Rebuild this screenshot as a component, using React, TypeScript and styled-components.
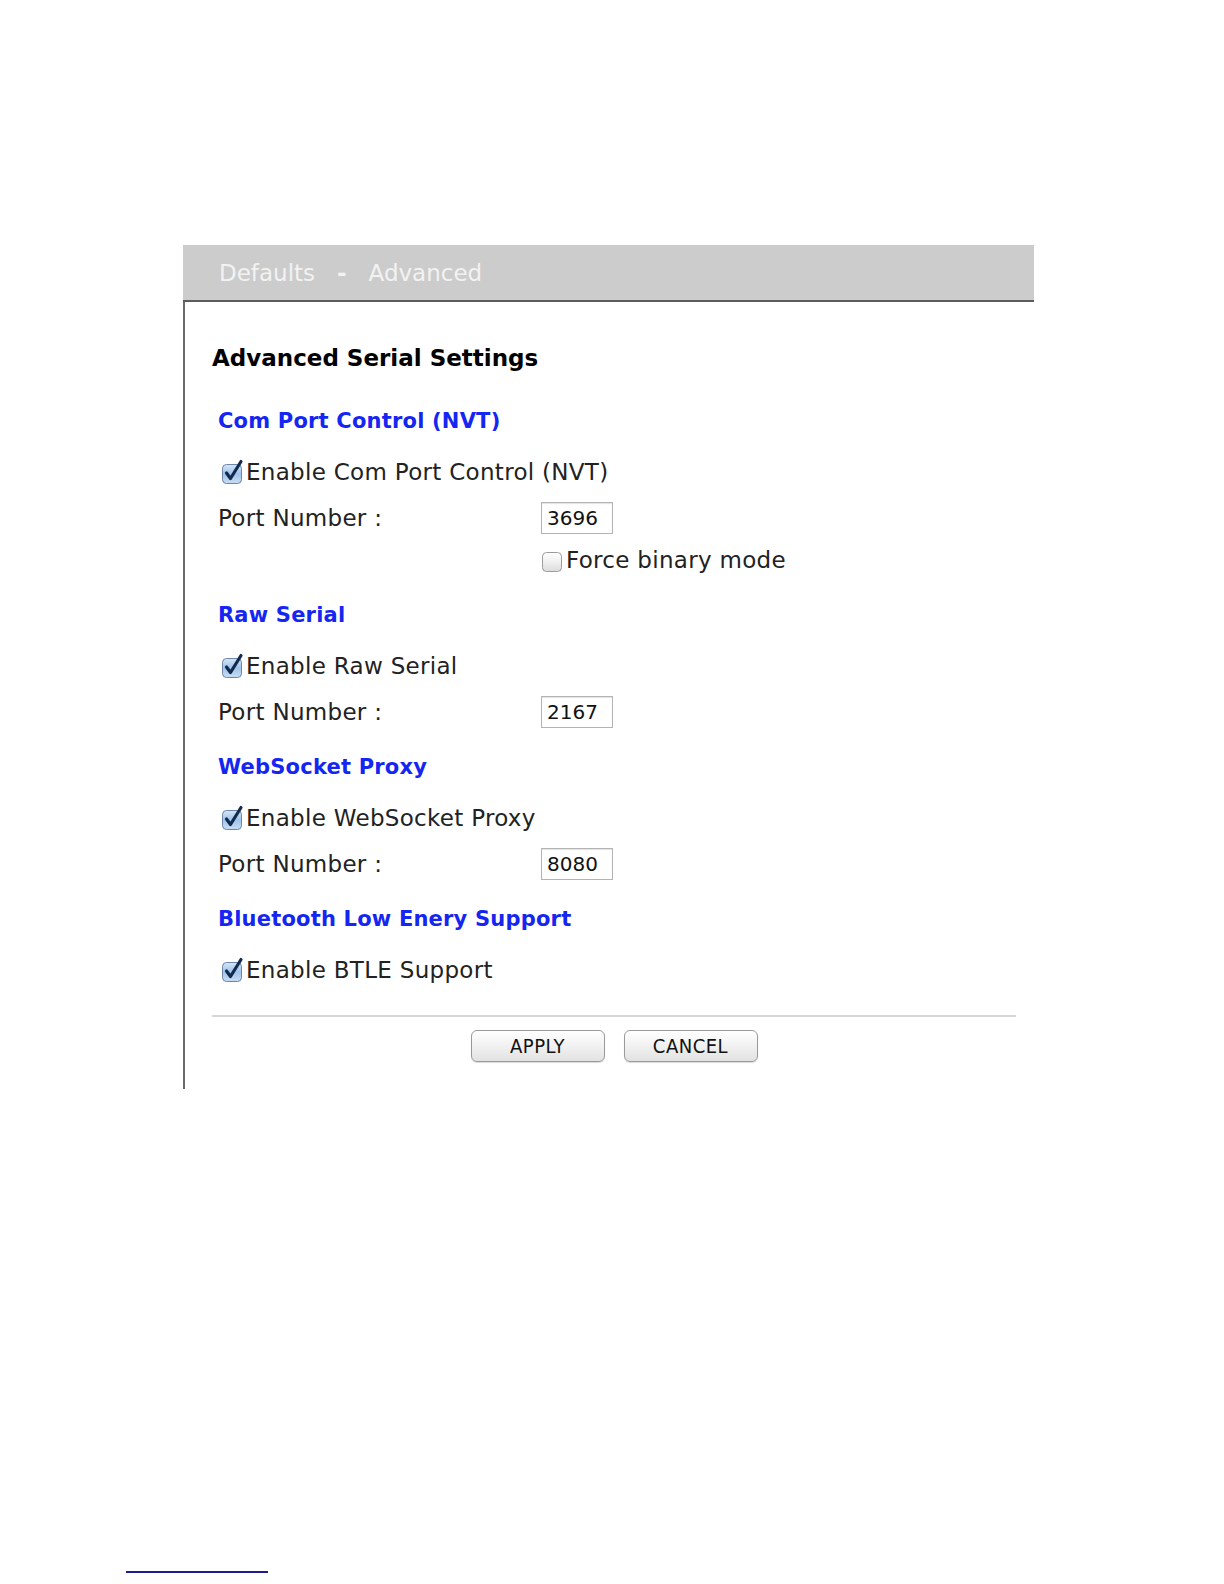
import React from 'react';
import styled, { createGlobalStyle } from 'styled-components';

const GlobalStyle = createGlobalStyle`
  html, body {
    margin: 0;
    background: #ffffff;
    font-family: "DejaVu Sans", Verdana, sans-serif;
  }
`;

const Page = styled.div`
  width: 100%;
  height: 1584px;
  overflow: hidden;
  padding-top: 245px;
  padding-left: 126px;
  box-sizing: border-box;
`;

const Panel = styled.div`
  margin-left: 57px;
  width: 851px;
`;

const TabBar = styled.div`
  height: 55px;
  background: #cccccc;
  border-bottom: 2px solid #5c5c5c;
  display: flex;
  align-items: center;
  padding-left: 36px;
  gap: 22px;
  color: #f2f2f2;
  font-size: 23px;
`;

const Dash = styled.span`
  font-weight: bold;
`;

const Body = styled.div`
  border-left: 2px solid #6a6a6a;
  padding: 40px 18px 27px 27px;
  display: flex;
  flex-direction: column;
`;

const Heading = styled.h1`
  margin: 0 0 31px;
  height: 32px;
  display: flex;
  align-items: center;
  font-size: 23px;
  font-weight: bold;
  color: #000;
`;

const Section = styled.section`
  display: flex;
  flex-direction: column;
  padding-left: 6px;
  & + & {
    margin-top: 23px;
  }
`;

const SectionTitle = styled.h2`
  margin: 0 0 19px;
  height: 32px;
  display: flex;
  align-items: center;
  font-size: 21px;
  letter-spacing: 0.2px;
  font-weight: bold;
  color: #1526f2;
`;

const Row = styled.div<{ $gap?: number }>`
  height: 32px;
  display: flex;
  align-items: center;
  font-size: 23px;
  letter-spacing: 0.3px;
  color: #222;
  margin-top: ${(p) => p.$gap ?? 14}px;
  &:first-of-type {
    margin-top: 0;
  }
`;

const CheckLabel = styled.label<{ $indent?: number }>`
  display: flex;
  align-items: center;
  margin-left: ${(p) => p.$indent ?? 2}px;
`;

const FieldLabel = styled.span`
  width: 323px;
  flex-shrink: 0;
`;

const PortInput = styled.div`
  width: 72px;
  height: 32px;
  box-sizing: border-box;
  border: 1px solid #b4b4b4;
  box-shadow: inset 0 1px 1px rgba(0, 0, 0, 0.12);
  display: flex;
  align-items: center;
  padding-left: 5px;
  font-size: 20px;
  letter-spacing: 0;
  color: #111;
`;

const Divider = styled.hr`
  margin: 29px 0 13px;
  border: none;
  border-top: 2px solid #d6d6d6;
`;

const Buttons = styled.div`
  display: flex;
  justify-content: center;
  gap: 19px;
`;

const Button = styled.button`
  width: 134px;
  height: 32px;
  border: 1px solid #9a9a9a;
  border-radius: 6px;
  background: linear-gradient(#ffffff, #f1f1f1 50%, #e2e2e2);
  box-shadow: 0 1px 1px rgba(0, 0, 0, 0.15);
  font-family: "DejaVu Sans Condensed", "DejaVu Sans", sans-serif;
  font-size: 20px;
  letter-spacing: 0.5px;
  color: #111;
  padding: 0;
`;

const FootLine = styled.div`
  margin-top: 482px;
  width: 142px;
  height: 2px;
  background: #1c1c8c;
`;

const Box = ({ checked }: { checked: boolean }) => (
  <svg width="26" height="26" viewBox="0 0 26 26">
    <defs>
      <linearGradient id={checked ? 'gOn' : 'gOff'} x1="0" y1="0" x2="0" y2="1">
        {checked ? (
          <>
            <stop offset="0" stopColor="#d6e6f8" />
            <stop offset="0.5" stopColor="#9fc3ea" />
            <stop offset="1" stopColor="#c9def4" />
          </>
        ) : (
          <>
            <stop offset="0" stopColor="#ffffff" />
            <stop offset="0.5" stopColor="#f0f0f0" />
            <stop offset="1" stopColor="#dcdcdc" />
          </>
        )}
      </linearGradient>
    </defs>
    <rect
      x="2.5"
      y="5.5"
      width="19"
      height="19"
      rx="4"
      fill={`url(#${checked ? 'gOn' : 'gOff'})`}
      stroke={checked ? '#6d85a6' : '#9c9c9c'}
    />
    {checked && (
      <path
        d="M6.5 14 L10.5 19.5 L21 2.5"
        fill="none"
        stroke="#132a4f"
        strokeWidth="3.2"
        strokeLinecap="round"
        strokeLinejoin="round"
      />
    )}
  </svg>
);

const CheckRow = ({ text, checked = true, gap, indent }: { text: string; checked?: boolean; gap?: number; indent?: number }) => (
  <Row $gap={gap}>
    <CheckLabel $indent={indent}>
      <Box checked={checked} />
      {text}
    </CheckLabel>
  </Row>
);

const PortRow = ({ value }: { value: string }) => (
  <Row>
    <FieldLabel>Port Number :</FieldLabel>
    <PortInput>{value}</PortInput>
  </Row>
);

export default function App() {
  return (
    <Page>
      <GlobalStyle />
      <Panel>
        <TabBar>
          <span>Defaults</span>
          <Dash>-</Dash>
          <span>Advanced</span>
        </TabBar>
        <Body>
          <Heading>Advanced Serial Settings</Heading>
          <Section>
            <SectionTitle>Com Port Control (NVT)</SectionTitle>
            <CheckRow text="Enable Com Port Control (NVT)" />
            <PortRow value="3696" />
            <CheckRow text="Force binary mode" checked={false} gap={10} indent={322} />
          </Section>
          <Section>
            <SectionTitle>Raw Serial</SectionTitle>
            <CheckRow text="Enable Raw Serial" />
            <PortRow value="2167" />
          </Section>
          <Section>
            <SectionTitle>WebSocket Proxy</SectionTitle>
            <CheckRow text="Enable WebSocket Proxy" />
            <PortRow value="8080" />
          </Section>
          <Section>
            <SectionTitle>Bluetooth Low Enery Support</SectionTitle>
            <CheckRow text="Enable BTLE Support" />
          </Section>
          <Divider />
          <Buttons>
            <Button>APPLY</Button>
            <Button>CANCEL</Button>
          </Buttons>
        </Body>
      </Panel>
      <FootLine />
    </Page>
  );
}
